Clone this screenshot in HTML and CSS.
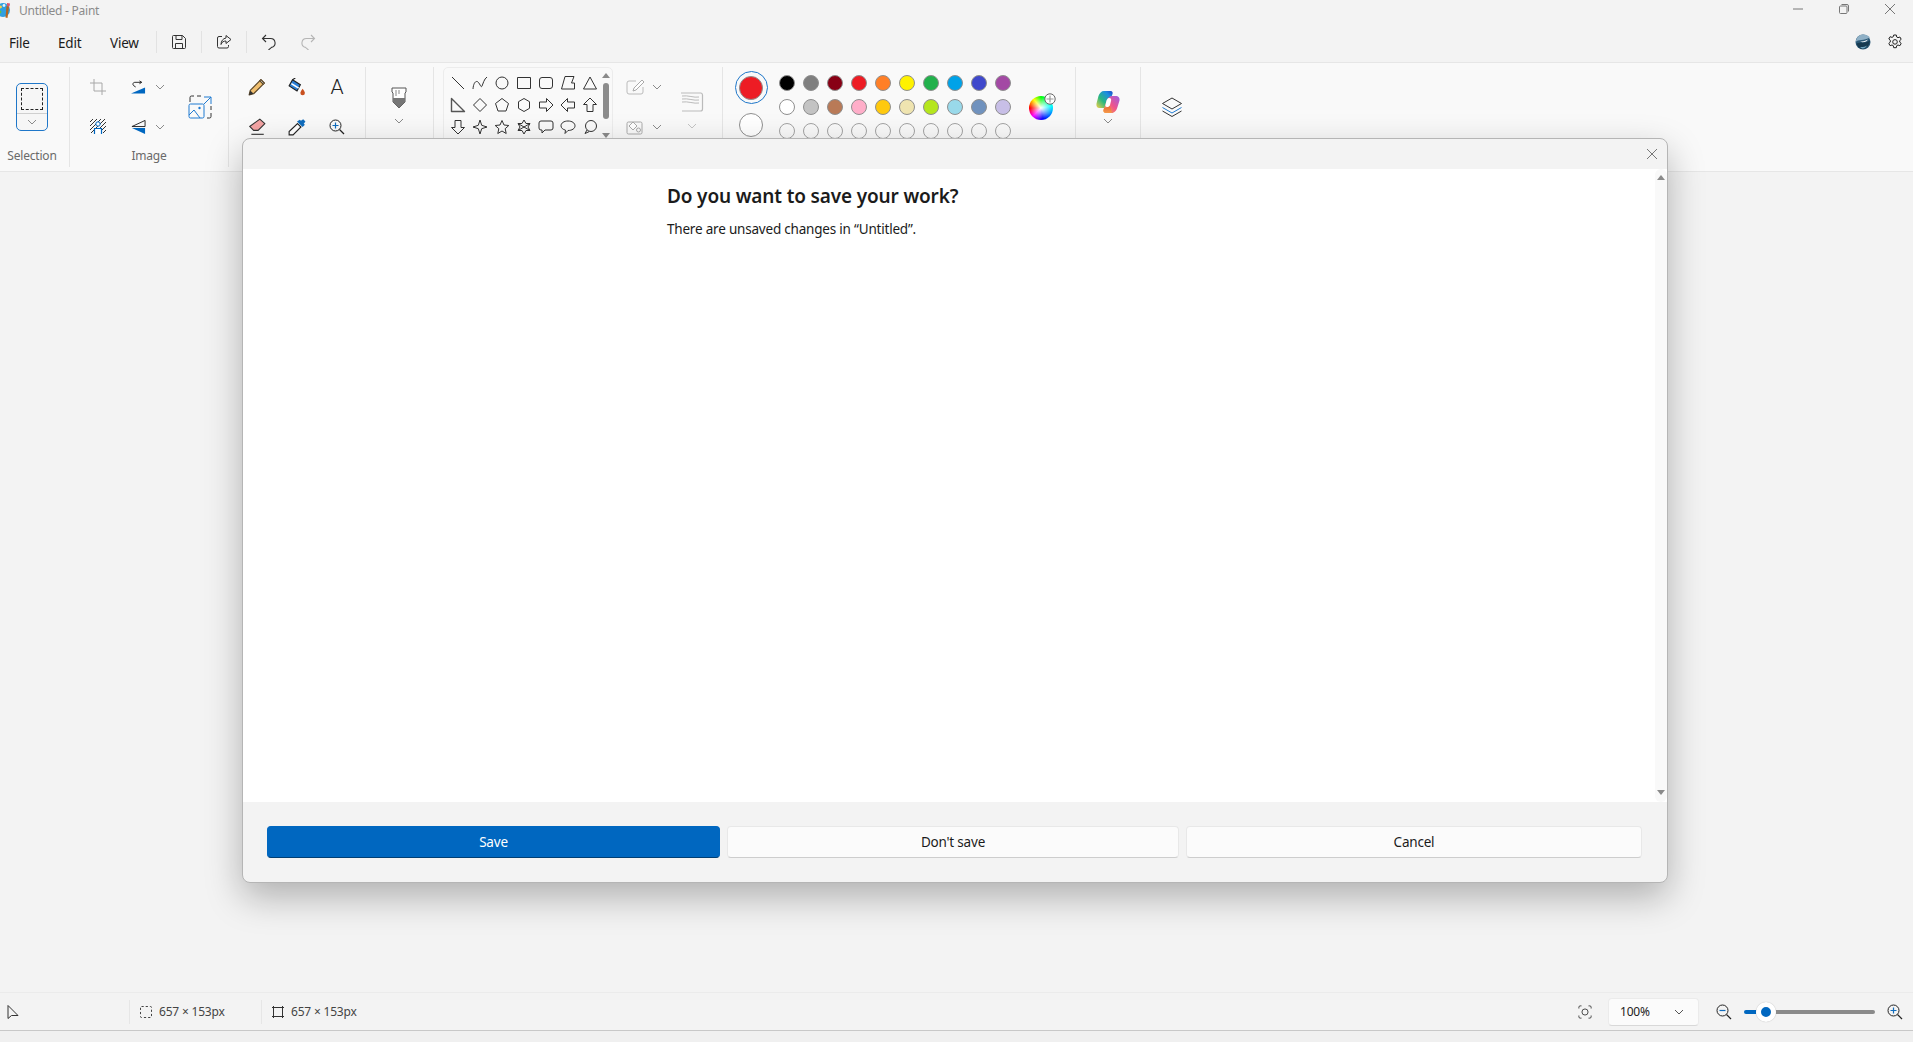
FILE: index.html
```html
<!DOCTYPE html>
<html lang="en">
<head>
<meta charset="utf-8">
<title>Untitled - Paint</title>
<link rel="stylesheet" href="styles.css">
</head>
<body>
<svg class="sprite" aria-hidden="true">
  <defs>
    <symbol id="chev" viewBox="0 0 10 6"><path d="M1 1l4 4 4-4" fill="none" stroke="currentColor" stroke-width="1"/></symbol>
    <linearGradient id="cpA" x1="0" y1="1" x2="1" y2="0"><stop offset="0" stop-color="#f7d046"/><stop offset=".4" stop-color="#2ab87f"/><stop offset=".75" stop-color="#1c8ee0"/><stop offset="1" stop-color="#1a45c8"/></linearGradient>
    <linearGradient id="cpB" x1="0" y1="1" x2="1" y2="0"><stop offset="0" stop-color="#f9b03f"/><stop offset=".5" stop-color="#f0558a"/><stop offset="1" stop-color="#9b5de5"/></linearGradient>
    <linearGradient id="cpC" x1="0" y1="0" x2="0" y2="1"><stop offset="0" stop-color="#e8622f"/><stop offset="1" stop-color="#f59a4a"/></linearGradient>
  </defs>
</svg>
<div class="app">
  <header class="titlebar">
    <svg class="app-icon" viewBox="0 0 16 16"><circle cx="7" cy="8" r="7" fill="#2f9fe0"/><circle cx="4.500" cy="5" r="1.400" fill="#f3d34a"/><circle cx="8" cy="3.500" r="1.400" fill="#e8f4fb"/><circle cx="4" cy="10" r="1.400" fill="#5cc04f"/><path d="M10.500 4l2.500.5L11.500 16 9.500 15.500z" fill="#b5651d"/><path d="M11 1l3 .5-.5 3-2.500-.5z" fill="#e0556b"/></svg>
    <span class="title-text">Untitled - Paint</span>
    <div class="window-buttons">
      <svg class="win-btn" viewBox="0 0 12 12"><path d="M1 6h10" stroke="#777" fill="none"/></svg>
      <svg class="win-btn" viewBox="0 0 12 12"><rect x="1.500" y="3" width="7.500" height="7.500" rx="1" stroke="#777" fill="none"/><path d="M3.500 1.500h5.500a1.500 1.500 0 0 1 1.500 1.500v5.500" stroke="#777" fill="none"/></svg>
      <svg class="win-btn" viewBox="0 0 12 12"><path d="M1 1l10 10M11 1L1 11" stroke="#777" fill="none"/></svg>
    </div>
  </header>

  <nav class="menubar">
    <span class="menu-item menu-file">File</span>
    <span class="menu-item menu-edit">Edit</span>
    <span class="menu-item menu-view">View</span>
    <i class="menu-sep"></i>
    <button class="tb-btn"><svg viewBox="0 0 16 16" class="ic16"><path d="M2.500 1.500h9l3 3v9a1 1 0 0 1-1 1h-11a1 1 0 0 1-1-1v-11a1 1 0 0 1 1-1z" fill="none" stroke="#333"/><path d="M5 1.500v4h6v-4M4.500 14.500v-5h7v5" fill="none" stroke="#333"/></svg></button>
    <i class="menu-sep"></i>
    <button class="tb-btn"><svg viewBox="0 0 16 16" class="ic16"><path d="M6 2.500H3a1.500 1.500 0 0 0-1.500 1.500v8.500A1.500 1.500 0 0 0 3 14h8a1.500 1.500 0 0 0 1.500-1.500V11" fill="none" stroke="#333"/><path d="M10 1.500l5 4-5 4V7C7.500 7 6 8 5 10.500 5 7 7 4.500 10 4z" fill="none" stroke="#333" stroke-linejoin="round"/></svg></button>
    <i class="menu-sep"></i>
    <button class="tb-btn"><svg viewBox="0 0 16 16" class="ic16"><path d="M5 1L1.500 4.500 5 8M2 4.500h7.500a4.500 4.500 0 0 1 1 8.900L7.500 16" fill="none" stroke="#333" stroke-width="1.100"/></svg></button>
    <button class="tb-btn tb-redo"><svg viewBox="0 0 16 16" class="ic16"><path d="M11 1l3.500 3.500L11 8M14 4.500H6.500a4.500 4.500 0 0 0-1 8.900L8.500 16" fill="none" stroke="#b5b5b5" stroke-width="1.100"/></svg></button>
    <div class="menu-right">
      <svg class="ic16" viewBox="0 0 16 16"><circle cx="8" cy="8" r="7.500" fill="#2c5a78"/><path d="M.8 8C3 5 9 7 15 3.500 13.500 1.500 11 .5 8 .5 4 .5 1 4 .8 8z" fill="#8fb0c6"/><path d="M1.500 9.500c4-2 8 .5 13.500-3-.5 4-3 8.500-7.500 8.500-3 0-5-2.500-6-5.500z" fill="#173a50"/><path d="M5 8c2-1 5-.5 8-2.500-1 2-3 3-8 2.500z" fill="#f4f7f9"/><path d="M5 13c2 .3 5 0 7-1.500-1 2-2.500 3-4 3-1.200 0-2.200-.6-3-1.500z" fill="#6ea4c0"/></svg>
      <svg class="ic16" viewBox="0 0 16 16"><path d="M6.700 1h2.600l.4 2 1.300.7 1.900-.7 1.300 2.300-1.500 1.300v1.500l1.500 1.300-1.300 2.300-1.900-.7-1.300.7-.4 2H6.700l-.4-2-1.300-.7-1.900.7-1.300-2.300 1.500-1.300V6.300L1.800 5l1.300-2.300 1.900.7 1.300-.7z" fill="none" stroke="#222" stroke-linejoin="round"/><circle cx="8" cy="7.900" r="2.300" fill="none" stroke="#222"/></svg>
    </div>
  </nav>

  <section class="ribbon">
    <div class="group group-selection">
      <div class="group-body">
        <div class="select-btn">
          <span class="select-top"><i class="dash-box"></i></span>
          <span class="select-bottom"><svg class="chev"><use href="#chev"/></svg></span>
        </div>
      </div>
      <div class="group-label">Selection</div>
    </div>

    <div class="group group-image">
      <div class="group-body image-grid">
        <span class="cell"><svg class="ic16" viewBox="0 0 16 16"><path d="M4 0v12h12M0 4h12v12" fill="none" stroke="#a8a8a8"/></svg></span>
        <span class="cell-split"><svg class="ic16 ic-wide" viewBox="0 0 16 16"><path d="M15 8.500V15H0z" fill="#0067c0"/><path d="M9 1.500l2.500 1.500L9 4.500M11 3H4a2 2 0 0 0-1 3.700L5 8" fill="none" stroke="#222"/></svg><svg class="chev"><use href="#chev"/></svg></span>
        <span class="cell cell-tall"><svg class="ic24" viewBox="0 0 24 24"><path d="M2 7V2.500A1.500 1.500 0 0 1 3.500 1H6M9 1h4M19 23h2.500a1.500 1.500 0 0 0 1.500-1.500V18M23 15v-4" fill="none" stroke="#333"/><path d="M16 2h7v7M23 2l-7 7" fill="none" stroke="#1f7ad1"/><rect x="1" y="9" width="15" height="14" rx="1.500" fill="none" stroke="#1f7ad1"/><path d="M1 20l5-5 6 8" fill="none" stroke="#1f7ad1"/><circle cx="11.500" cy="13" r="1.200" fill="#1f7ad1"/></svg></span>
        <span class="cell"><svg class="ic16" viewBox="0 0 16 16"><path d="M0 3l3-3M0 7l7-7M0 11l11-11M1 14L15 0M5 14L16 3M9 14l7-7M13 14l3-3" stroke="#333"/><circle cx="8" cy="5" r="2.200" fill="#fff" stroke="#0067c0"/><path d="M4.500 15v-5.500h7V15" fill="#fff" stroke="#0067c0" stroke-width="1.200"/></svg></span>
        <span class="cell-split"><svg class="ic16 ic-wide" viewBox="0 0 16 16"><path d="M15 1v6.500H1z" fill="none" stroke="#222"/><path d="M1 9h14v6.500z" fill="#0067c0"/></svg><svg class="chev"><use href="#chev"/></svg></span>
      </div>
      <div class="group-label">Image</div>
    </div>

    <div class="group group-tools">
      <div class="group-body tools-grid">
        <span class="cell"><svg class="ic18" viewBox="0 0 16 16"><path d="M11.500 1.500l3 3L5 14l-4 1 1-4z" fill="#f0bf70" stroke="#5a4526" stroke-linejoin="round"/><path d="M10.500 2.500l3 3 1-1-3-3z" fill="#eee" stroke="#5a4526"/><path d="M1 15l1-4 3 3z" fill="#333"/></svg></span>
        <span class="cell"><svg class="ic18" viewBox="0 0 16 16"><path d="M4 1.500l7 4.500-3 5.500L1 7z" fill="#2b7fd6" stroke="#222"/><path d="M3 5l6.500 4" stroke="#fff" stroke-width="1.500"/><path d="M4 1.500L6.500 0" stroke="#222"/><path d="M13 9.500c-1.500 2-2 3-2 3.800a2 2 0 0 0 4 0c0-.8-.5-1.800-2-3.800z" fill="#c9501f"/></svg></span>
        <span class="cell"><span class="letter-a">A</span></span>
        <span class="cell"><svg class="ic18" viewBox="0 0 16 16"><path d="M10.500 1L15 5l-6 6H5L1.500 7.500z" fill="#f3a3a3" stroke="#333" stroke-linejoin="round"/><path d="M3 14.500h11" stroke="#333"/></svg></span>
        <span class="cell"><svg class="ic18" viewBox="0 0 16 16"><path d="M8.500 5l3 3-7 7H1v-3z" fill="#fff" stroke="#222"/><path d="M8 3l5 5 2-2-1-1 1.500-2-2-2-2 1.500-1-1z" fill="#0f6cbd"/></svg></span>
        <span class="cell"><svg class="ic16" viewBox="0 0 16 16"><circle cx="6.500" cy="6.500" r="5.500" fill="none" stroke="#222"/><path d="M10.500 10.500L15 15" stroke="#222" stroke-width="1.200"/><path d="M3.500 6.500h6M6.500 3.500v6" stroke="#0f6cbd" stroke-width="1.200"/></svg></span>
      </div>
    </div>

    <div class="group group-brush">
      <div class="brush-col">
        <svg class="ic-brush" viewBox="0 0 16 24"><path d="M1 2h14v4l-1 1v9l-6 6-6-6V7L1 6z" fill="#fff" stroke="#555"/><path d="M2 12h12v4l-6 6-6-6z" fill="#767676"/><path d="M5 4v6M8 4v4" stroke="#888"/></svg>
        <svg class="chev"><use href="#chev"/></svg>
      </div>
    </div>

    <div class="group group-shapes">
      <div class="gallery">
        <div class="shape-grid">
          <svg class="shape" viewBox="0 0 16 16"><path d="M2 2l12 12"/></svg>
          <svg class="shape" viewBox="0 0 16 16"><path d="M1 14C1.500 7 4.500 5 6.500 7.500S9 13 10 11s2-7 5-9"/></svg>
          <svg class="shape" viewBox="0 0 16 16"><circle cx="8" cy="8" r="6"/></svg>
          <svg class="shape" viewBox="0 0 16 16"><rect x="1.500" y="2.500" width="13" height="11"/></svg>
          <svg class="shape" viewBox="0 0 16 16"><rect x="1.500" y="2.500" width="13" height="11" rx="2.500"/></svg>
          <svg class="shape" viewBox="0 0 16 16"><path d="M1.500 14L5 1.500h9L11.500 8h3v6z"/></svg>
          <svg class="shape" viewBox="0 0 16 16"><path d="M8 2l6.500 12h-13z"/></svg>
          <svg class="shape shape-heavy" viewBox="0 0 16 16"><path d="M1.500 1.500L14.500 14.500H1.500z"/></svg>
          <svg class="shape" viewBox="0 0 16 16"><path d="M8 1.500L14.500 8 8 14.500 1.500 8z"/></svg>
          <svg class="shape" viewBox="0 0 16 16"><path d="M8 1.500l6.500 5-2.500 7.500H4L1.500 6.500z"/></svg>
          <svg class="shape" viewBox="0 0 16 16"><path d="M8 1.500l5.500 3.200v6.600L8 14.500l-5.500-3.200V4.700z"/></svg>
          <svg class="shape" viewBox="0 0 16 16"><path d="M1.500 5h7V1.500L15 8l-6.500 6.500V11h-7z"/></svg>
          <svg class="shape" viewBox="0 0 16 16"><path d="M14.500 5h-7V1.500L1 8l6.500 6.500V11h7z"/></svg>
          <svg class="shape" viewBox="0 0 16 16"><path d="M5 14.500v-7H1.500L8 1l6.500 6.500H11v7z"/></svg>
          <svg class="shape" viewBox="0 0 16 16"><path d="M5 1.500v7H1.500L8 15l6.500-6.500H11v-7z"/></svg>
          <svg class="shape" viewBox="0 0 16 16"><path d="M8 1l1.700 5.300L15 8l-5.300 1.700L8 15l-1.700-5.300L1 8l5.300-1.700z"/></svg>
          <svg class="shape" viewBox="0 0 16 16"><path d="M8 1.500l2 4.500 4.800.5-3.600 3.200 1 4.800L8 12l-4.200 2.500 1-4.800-3.600-3.200L6 6z"/></svg>
          <svg class="shape" viewBox="0 0 16 16"><path d="M8 1l2 3.500h4l-2 3.500 2 3.500h-4L8 15l-2-3.500H2L4 8 2 4.500h4zM2 4.500L14 11.500M14 4.500L2 11.500"/></svg>
          <svg class="shape" viewBox="0 0 16 16"><path d="M3 2h10a2 2 0 0 1 2 2v5a2 2 0 0 1-2 2H7l-3 3v-3H3a2 2 0 0 1-2-2V4a2 2 0 0 1 2-2z"/></svg>
          <svg class="shape" viewBox="0 0 16 16"><path d="M8 2c4 0 7 2 7 4.800S12 11.500 8 11.500l-3 3 .5-3.300C3 10.500 1 9 1 6.800 1 4 4 2 8 2z"/></svg>
          <svg class="shape" viewBox="0 0 16 16"><circle cx="9" cy="7" r="5.500"/><path d="M5 11l-2 3.500 4-1.800"/></svg>
        </div>
        <div class="gallery-scroll">
          <i class="arrow-up"></i>
          <i class="gallery-thumb"></i>
          <i class="arrow-down"></i>
        </div>
      </div>
      <div class="style-col">
        <span class="style-row"><svg class="ic-style" viewBox="0 0 20 16"><path d="M10 2H3a2 2 0 0 0-2 2v9a2 2 0 0 0 2 2h12a2 2 0 0 0 2-2V8" fill="none" stroke="#bbb"/><path d="M7 12l1-3 8-8 2 2-8 8z" fill="#fff" stroke="#aaa"/></svg><svg class="chev"><use href="#chev"/></svg></span>
        <span class="style-row"><svg class="ic-style" viewBox="0 0 20 16"><rect x="1" y="3" width="15" height="12" rx="1.500" fill="none" stroke="#aaa"/><path d="M3 7l4-4 4 4-4 4z" fill="#fff" stroke="#aaa"/><circle cx="12.500" cy="11" r="2" fill="none" stroke="#aaa"/></svg><svg class="chev"><use href="#chev"/></svg></span>
      </div>
      <div class="size-col">
        <svg class="ic24" viewBox="0 0 24 24"><path d="M1 3h20a2 2 0 0 1 1.500 2v14a2 2 0 0 1-2 2H2" fill="none" stroke="#bbb" stroke-width="1.200"/><path d="M2 6c6-1 12 2 17 1M2 9c6-1 12 2 17 1M2 12c6-1 12 2 17 1" fill="none" stroke="#bbb"/></svg>
        <svg class="chev chev-faint"><use href="#chev"/></svg>
      </div>
    </div>

    <div class="group group-colors">
      <div class="current-col">
        <span class="current-ring"><i class="dot-big dot-red"></i></span>
        <i class="dot-big dot-white"></i>
      </div>
      <div class="palette">
        <i class="sw s1"></i><i class="sw s2"></i><i class="sw s3"></i><i class="sw s4"></i><i class="sw s5"></i><i class="sw s6"></i><i class="sw s7"></i><i class="sw s8"></i><i class="sw s9"></i><i class="sw s10"></i>
        <i class="sw s11"></i><i class="sw s12"></i><i class="sw s13"></i><i class="sw s14"></i><i class="sw s15"></i><i class="sw s16"></i><i class="sw s17"></i><i class="sw s18"></i><i class="sw s19"></i><i class="sw s20"></i>
        <i class="sw s0"></i><i class="sw s0"></i><i class="sw s0"></i><i class="sw s0"></i><i class="sw s0"></i><i class="sw s0"></i><i class="sw s0"></i><i class="sw s0"></i><i class="sw s0"></i><i class="sw s0"></i>
      </div>
      <div class="wheel">
        <svg class="wheel-plus" viewBox="0 0 12 12"><circle cx="6" cy="6" r="5.200" fill="#fff" stroke="#666"/><path d="M6 2.500v7M2.500 6h7" stroke="#999" stroke-width="1.200"/></svg>
      </div>
    </div>

    <div class="group group-copilot">
      <svg class="ic-copilot" viewBox="0 0 24 24">
        <path d="M8 1h6.500c2 0 2.500 1.500 2 3L13 14c-1 3-2 4-5 4H3.500C1 18 0 16 .5 13.500L2.500 6C3.500 3 5.500 1 8 1z" fill="url(#cpA)"/>
        <path d="M16.500 6h3c3 0 4.500 2 4 4.500L21.500 17c-1 3.500-3 6-6 6H10c-2 0-3-1.500-2.500-3L10.500 11c1-3 3-5 6-5z" fill="url(#cpB)"/>
        <path d="M8 18c3 0 4.500-1 5.500-3l2 6c.3 1 0 2-1 2H10c-2 0-3-1.500-2.500-3z" fill="url(#cpC)"/>
        <path d="M13 8c2 0 2.500 1 2 3l-1 4c-.5 1.500-1.500 2-3 2-1.500 0-2-1-1.500-2.500l1-4C11 9.500 11.500 8 13 8z" fill="#fff"/>
      </svg>
      <svg class="chev"><use href="#chev"/></svg>
    </div>

    <div class="group group-layers">
      <svg class="ic-layers" viewBox="0 0 20 20"><path d="M10 1l9.500 5.500L10 12 .5 6.500z" fill="none" stroke="#333"/><path d="M.5 10.500L10 16l9.500-5.500" fill="none" stroke="#1f7ad1"/><path d="M.5 14L10 19.500 19.500 14" fill="none" stroke="#333"/></svg>
    </div>
  </section>

  <main class="canvas-area"></main>

  <footer class="statusbar">
    <div class="st-cell st-cursor"><svg class="ic16" viewBox="0 0 16 16"><path d="M3 1.500v13l3.500-3H13z" fill="none" stroke="#333" stroke-linejoin="round"/></svg></div>
    <div class="st-cell st-size"><svg class="ic12" viewBox="0 0 12 12"><rect x=".5" y=".5" width="11" height="11" rx="1" fill="none" stroke="#444" stroke-dasharray="2.200 2"/></svg><span>657 × 153px</span></div>
    <div class="st-cell st-canvas"><svg class="ic12" viewBox="0 0 12 12"><path d="M1.500 0v12M10.500 0v12M0 1.500h12M0 10.500h12" stroke="#333" fill="none"/></svg><span>657 × 153px</span></div>
    <div class="st-right">
      <svg class="ic14" viewBox="0 0 16 16"><path d="M1 4V2.500A1.500 1.500 0 0 1 2.500 1H4M12 1h1.500A1.500 1.500 0 0 1 15 2.500V4M15 12v1.500a1.500 1.500 0 0 1-1.500 1.500H12M4 15H2.500A1.500 1.500 0 0 1 1 13.500V12" fill="none" stroke="#333"/><circle cx="8" cy="8" r="3.500" fill="none" stroke="#333"/></svg>
      <div class="zoom-select"><span>100%</span><svg class="chev chev-dark"><use href="#chev"/></svg></div>
      <svg class="ic16 zoom-out" viewBox="0 0 16 16"><circle cx="6.500" cy="6.500" r="5.500" fill="none" stroke="#222"/><path d="M10.500 10.500L15 15" stroke="#222" stroke-width="1.200"/><path d="M3.500 6.500h6" stroke="#0f6cbd" stroke-width="1.200"/></svg>
      <div class="slider"><i class="slider-fill"></i><i class="slider-thumb"></i><i class="slider-rest"></i></div>
      <svg class="ic16 zoom-in" viewBox="0 0 16 16"><circle cx="6.500" cy="6.500" r="5.500" fill="none" stroke="#222"/><path d="M10.500 10.500L15 15" stroke="#222" stroke-width="1.200"/><path d="M3.500 6.500h6M6.500 3.500v6" stroke="#0f6cbd" stroke-width="1.200"/></svg>
    </div>
  </footer>
  <div class="bottom-strip"></div>
</div>

<div class="dialog" role="dialog">
  <div class="dialog-head"><svg class="dialog-x" viewBox="0 0 12 12"><path d="M1 1l10 10M11 1L1 11" stroke="#777" fill="none"/></svg></div>
  <div class="dialog-body">
    <div class="dialog-text">
      <h1 class="dialog-title">Do you want to save your work?</h1>
      <p class="dialog-msg">There are unsaved changes in “Untitled”.</p>
    </div>
    <div class="dialog-scroll"><i class="arrow-up"></i><i class="arrow-down"></i></div>
  </div>
  <div class="dialog-foot">
    <button class="btn btn-primary">Save</button>
    <button class="btn">Don't save</button>
    <button class="btn">Cancel</button>
  </div>
</div>
</body>
</html>
```

FILE: styles.css
```css
* { box-sizing: border-box; }
html, body { margin: 0; height: 100%; overflow: hidden; }
body { font-family: "Noto Sans", "Open Sans", sans-serif; color: #1b1b1b; background: #f3f3f3; position: relative; }
i { display: block; }
svg { display: block; flex: none; }
.sprite { position: absolute; width: 0; height: 0; }
.app { display: flex; flex-direction: column; height: 1042px; }

.ic12 { width: 12px; height: 12px; }
.ic14 { width: 14px; height: 14px; }
.ic16 { width: 16px; height: 16px; }
.ic18 { width: 18px; height: 18px; }
.ic24 { width: 24px; height: 24px; }
.chev { width: 10px; height: 6px; color: #8a8a8a; }
.chev-faint { color: #c4c4c4; }
.chev-dark { color: #555; }

.titlebar { height: 30px; display: flex; align-items: center; background: #f3f3f3; flex: none; padding-bottom: 10px; }
.app-icon { width: 16px; height: 16px; margin-left: -4px; }
.title-text { margin-left: 7px; font-size: 12px; letter-spacing: -.25px; color: #8b8b8b; }
.window-buttons { margin-left: auto; display: flex; margin-right: 17px; gap: 34px; }
.win-btn { width: 12px; height: 12px; position: relative; top: -1px; }

.menubar { height: 33px; flex: none; display: flex; align-items: center; background: #f3f3f3; border-bottom: 1px solid #e6e6e6; padding-bottom: 9px; }
.menu-item { font-size: 13.500px; letter-spacing: -.2px; color: #1b1b1b; padding-top: 3px; }
.menu-file { margin-left: 9px; width: 49px; }
.menu-edit { width: 52px; }
.menu-view { width: 46px; }
.menu-sep { width: 1px; height: 22px; background: #e2e2e2; }
.tb-btn { width: 44px; height: 24px; border: 0; padding: 0; background: none; display: flex; align-items: center; justify-content: center; }
.tb-redo { margin-left: -5px; }
.menu-right { margin-left: auto; display: flex; gap: 16px; margin-right: 10px; }

.ribbon { height: 109px; flex: none; display: flex; background: #f9f9f9; border-bottom: 1px solid #e6e6e6; padding: 4px 0; }
.group { height: 100px; border-right: 1px solid #e5e5e5; flex: none; display: flex; flex-direction: column; }
.group-body { height: 80px; }
.group-label { height: 20px; font-size: 12px; letter-spacing: -.2px; color: #6a6a6a; text-align: center; line-height: 18px; }

.group-selection { width: 70px; }
.group-selection .group-body { padding: 16px 0 0 16px; }
.group-selection .group-label { width: 64px; }
.select-btn { width: 32px; height: 48px; border: 1px solid #1f77c9; border-radius: 5px; display: flex; flex-direction: column; background: #f6f6f6; overflow: hidden; }
.select-top { height: 30px; display: flex; align-items: center; justify-content: center; border-bottom: 1px solid #cfcfcf; }
.dash-box { width: 22px; height: 22px; border: 1px dashed #222; }
.select-bottom { flex: 1; display: flex; align-items: center; justify-content: center; }

.group-image { width: 159px; }
.image-grid { display: grid; grid-template-columns: 40px 62px 40px; grid-template-rows: 40px 40px; padding-left: 8px; }
.cell { display: flex; align-items: center; justify-content: center; }
.cell-tall { grid-column: 3; grid-row: 1 / 3; }
.cell-split { display: flex; align-items: center; padding-left: 6px; gap: 9px; }
.ic-wide { width: 15px; height: 16px; margin-left: 7px; }

.group-tools { width: 137px; }
.tools-grid { display: grid; grid-template-columns: repeat(3, 40px); grid-template-rows: 40px 40px; padding-left: 8px; }
.letter-a { font-family: "Roboto", "Liberation Sans", sans-serif; font-weight: 300; font-size: 21px; line-height: 1; color: #222; }

.group-brush { width: 68px; align-items: center; padding-top: 19px; padding-right: 2px; }
.brush-col { display: flex; flex-direction: column; align-items: center; gap: 8px; }
.ic-brush { width: 16px; height: 24px; }

.group-shapes { width: 289px; flex-direction: row; padding-left: 9px; overflow: hidden; }
.gallery { width: 170px; height: 100px; border: 1px solid #ececec; border-radius: 5px 5px 0 0; display: flex; padding: 4px 0 0 3px; }
.shape-grid { display: grid; grid-template-columns: repeat(7, 22px); grid-auto-rows: 22px; width: 153px; }
.shape { width: 16px; height: 16px; margin: 3px; fill: none; stroke: #333; stroke-width: 1; stroke-linejoin: round; }
.shape-heavy { stroke: #555; stroke-width: 1.400; }
.gallery-scroll { width: 12px; display: flex; flex-direction: column; align-items: center; padding-top: 1px; }
.arrow-up { width: 0; height: 0; border: 4px solid transparent; border-top: 0; border-bottom: 5px solid #8a8a8a; }
.arrow-down { width: 0; height: 0; border: 4px solid transparent; border-bottom: 0; border-top: 5px solid #8a8a8a; }
.gallery-thumb { width: 6px; height: 36px; border-radius: 3px; background: #8c8c8c; margin: 5px 0 14px; }
.style-col { width: 54px; margin-left: 13px; display: grid; grid-template-rows: 40px 40px; }
.style-row { display: flex; align-items: center; gap: 6px; }
.ic-style { width: 20px; height: 16px; }
.size-col { display: flex; flex-direction: column; align-items: center; gap: 9px; padding-top: 23px; }

.group-colors { width: 353px; flex-direction: row; padding: 4px 0 0 8px; overflow: hidden; }
.current-col { width: 44px; display: flex; flex-direction: column; align-items: center; padding-right: 4px; gap: 9px; }
.current-ring { width: 33px; height: 33px; border: 1px solid #1f77c9; border-radius: 50%; display: flex; align-items: center; justify-content: center; }
.dot-big { width: 24px; height: 24px; border-radius: 50%; border: 1px solid #8f8f8f; }
.dot-red { background: #ed1c24; }
.dot-white { background: #fff; }
.palette { display: grid; grid-template-columns: repeat(10, 24px); grid-auto-rows: 24px; width: 240px; padding-top: 4px; }
.sw { width: 16px; height: 16px; margin: 0 4px; border-radius: 50%; border: 1px solid #8f8f8f; background: transparent; }
.s0 { border-color: #a3a3a3; }
.s1 { background: #000; } .s2 { background: #7f7f7f; } .s3 { background: #880015; } .s4 { background: #ed1c24; } .s5 { background: #ff7f27; }
.s6 { background: #fff200; } .s7 { background: #22b14c; } .s8 { background: #00a2e8; } .s9 { background: #3f48cc; } .s10 { background: #a349a4; }
.s11 { background: #fff; } .s12 { background: #c3c3c3; } .s13 { background: #b97a57; } .s14 { background: #ffaec9; } .s15 { background: #ffc90e; }
.s16 { background: #efe4b0; } .s17 { background: #b5e61d; } .s18 { background: #99d9ea; } .s19 { background: #7092be; } .s20 { background: #c8bfe7; }
.wheel { width: 24px; height: 24px; margin: 25px 0 0 14px; border-radius: 50%; position: relative; background: radial-gradient(circle, #fff 0%, rgba(255,255,255,0) 65%), conic-gradient(#0f0 0deg, #0ff 80deg, #00f 170deg, #f0f 225deg, #f00 270deg, #ff0 320deg, #0f0 360deg); }
.wheel-plus { position: absolute; left: 15px; top: -3px; width: 12px; height: 12px; }

.group-copilot { width: 65px; align-items: center; padding-top: 23px; gap: 4px; }
.ic-copilot { width: 24px; height: 24px; }
.group-layers { width: 66px; border-right: 0; align-items: center; padding: 30px 4px 0 0; }
.ic-layers { width: 20px; height: 20px; }

.canvas-area { flex: 1; background: #f3f3f3; }

.statusbar { height: 39px; flex: none; display: flex; align-items: center; background: #f3f3f3; border-top: 1px solid #ebebeb; border-bottom: 1px solid #c8c8c8; font-size: 12px; letter-spacing: -.2px; color: #444; }
.st-cell { display: flex; align-items: center; height: 24px; }
.st-cursor { width: 129px; padding-left: 5px; }
.st-size { width: 132px; padding-left: 10px; gap: 7px; border-left: 1px solid #e6e6e6; }
.st-canvas { padding-left: 10px; gap: 7px; border-left: 1px solid #e6e6e6; }
.st-right { margin-left: auto; display: flex; align-items: center; }
.zoom-select { width: 91px; height: 28px; margin-left: 16px; background: #fbfbfb; border: 1px solid #ebebeb; border-bottom-color: #d8d8d8; border-radius: 4px; display: flex; align-items: center; justify-content: space-between; padding: 0 14px 0 11px; color: #222; }
.zoom-out { margin-left: 17px; }
.slider { width: 131px; margin-left: 12px; display: flex; align-items: center; }
.slider-fill { width: 12px; height: 4px; background: #0067c0; border-radius: 2px 0 0 2px; }
.slider-thumb { width: 20px; height: 20px; border-radius: 50%; background: #0067c0; border: 5px solid #fff; box-shadow: 0 0 1px rgba(0,0,0,.3); }
.slider-rest { flex: 1; height: 4px; background: #8a8a8a; border-radius: 0 2px 2px 0; }
.zoom-in { margin: 0 10px 0 12px; }

.bottom-strip { height: 11px; flex: none; background: #f0f0f0; }

.dialog { position: absolute; left: 242px; top: 138px; width: 1426px; height: 745px; display: flex; flex-direction: column; border: 1px solid #b5b5b5; border-radius: 8px; overflow: hidden; background: #f3f3f3; box-shadow: 0 14px 36px rgba(0,0,0,.28); }
.dialog-head { height: 30px; flex: none; display: flex; justify-content: flex-end; align-items: center; padding-right: 9px; }
.dialog-x { width: 12px; height: 12px; }
.dialog-body { height: 633px; flex: none; background: #fff; display: flex; }
.dialog-text { flex: 1; padding: 13px 0 0 424px; }
.dialog-title { margin: 0; font-size: 19px; line-height: 28px; font-weight: 600; letter-spacing: -.15px; color: #1b1b1b; }
.dialog-msg { margin: 9px 0 0; font-size: 13.500px; line-height: 20px; letter-spacing: -.2px; color: #1b1b1b; }
.dialog-scroll { width: 12px; background: #f9f9f9; border-radius: 6px; display: flex; flex-direction: column; align-items: center; justify-content: space-between; padding: 6px 0 7px; }
.dialog-foot { flex: 1; display: grid; grid-template-columns: 453px 452px 456px; gap: 7px; padding: 24px; }
.btn { height: 32px; font: inherit; font-size: 13.500px; letter-spacing: -.2px; color: #1b1b1b; background: #fbfbfb; border: 1px solid #e8e8e8; border-bottom-color: #cdcdcd; border-radius: 4px; padding: 0; }
.btn-primary { background: #0067c0; color: #fff; border-color: #0067c0; border-bottom-color: #003e73; }
```
